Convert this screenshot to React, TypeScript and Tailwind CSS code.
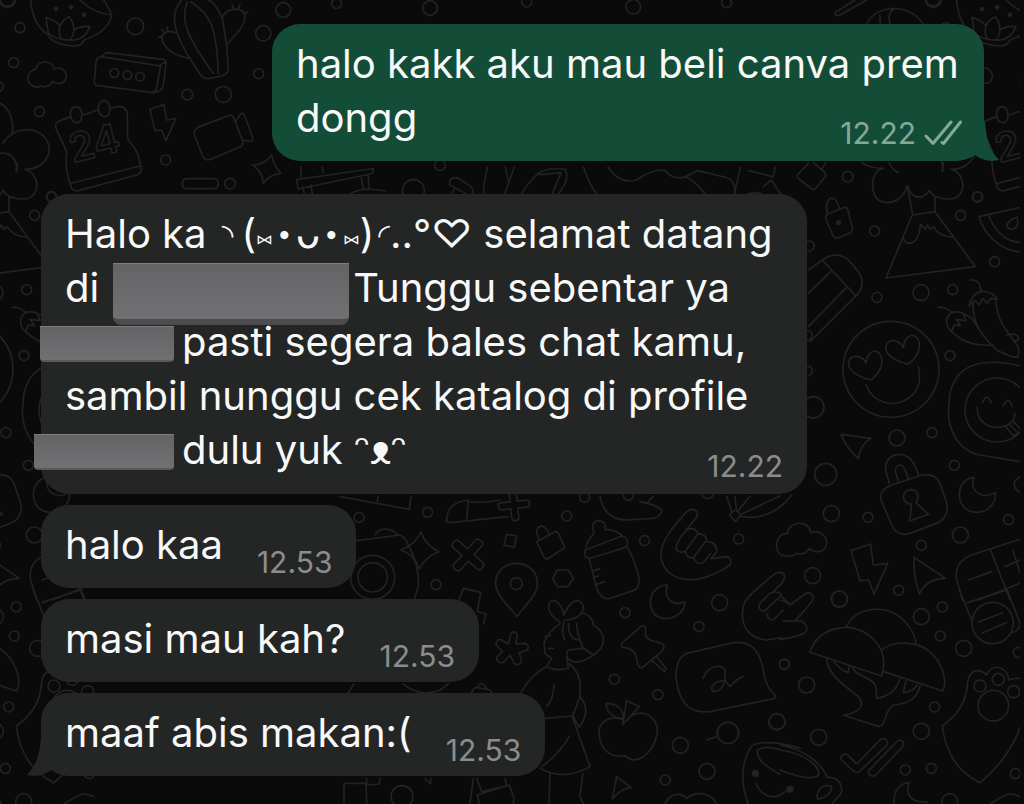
import React from "react";

type Dot = [number, number, number];

type Patch = {
  transform: string;
  width: number;
  circles: Dot[];
  dots?: Dot[];
  paths: string[];
};

const plus =
  "M-13 -48Q-13 -58 0 -58Q13 -58 13 -48L13 -13L48 -13Q58 -13 58 0Q58 13 48 13L13 13L13 48Q13 58 0 58Q-13 58 -13 48L-13 13L-48 13Q-58 13 -58 0Q-58 -13 -48 -13L-13 -13Z";

const patches: Patch[] = [
  {
    // bowl, cloud, cassette, cactus, calendar, camera
    transform: "scale(0.3333)",
    width: 5,
    circles: [
      [22, -4, 22], [60, 83, 15], [406, 79, 25], [41, 188, 15], [-6, 260, 15], [118, 335, 15],
      [790, 100, 23], [776, 221, 15], [562, 284, 16], [670, 283, 24], [497, 480, 15], [690, 551, 16],
      [154, 590, 15], [343, 219, 13], [382, 225, 13], [420, 230, 13], [850, 30, 22], [1010, 10, 15],
      [1290, 24, 22], [1580, 6, 15], [1900, 20, 22], [2180, 8, 15],
    ],
    dots: [[168, 27, 7], [213, 22, 7], [252, 44, 7]],
    paths: [
      "M92 0C95 50 115 85 145 105C150 125 190 138 225 138C245 138 250 125 252 120C295 105 330 80 335 45C325 20 318 8 310 0M240 0C265 25 300 42 335 45",
      "M145 100L138 52C155 58 172 65 180 78C185 65 195 55 208 50C220 65 222 80 222 90C235 82 255 78 270 80C262 100 250 118 222 120C190 122 165 115 145 100M180 78C175 95 178 108 185 118M222 90C220 105 215 115 210 120",
      "M100 258C75 250 80 212 108 207C112 180 155 178 163 207C190 195 205 225 196 240C188 255 165 250 158 244C150 262 130 262 125 258C115 262 105 262 100 258",
      "M303 170Q290 172 288 185L283 245Q283 256 295 257L455 277Q468 278 470 262L482 198L303 170L320 158L490 178Q500 180 498 192L490 255Q488 275 460 278M480 196L498 185",
      "M545 0C510 40 520 90 560 160L600 222Q608 236 625 236L665 228Q685 222 685 205L680 135L668 60C655 25 640 5 625 0M562 5C540 60 560 110 640 220M572 5C630 40 650 80 655 220",
      "M525 98C500 90 480 100 487 122C497 150 530 170 572 175M668 50C680 20 735 20 735 50C735 80 700 110 680 135M485 110L475 112M492 98L486 88M503 92L500 82M700 25L696 14M715 25L720 13M732 40L743 37",
      "M212 350L180 362Q162 368 168 385L200 455C193 500 205 540 215 565Q222 574 235 572L410 525Q425 520 424 505L420 490C415 450 395 435 383 415L382 340Q378 318 355 320L330 324M250 345L293 330M215 550L420 498",
      "M228 320Q245 322 246 345Q245 368 230 368Q212 365 211 342Q212 322 228 320M312 302Q329 304 330 327Q329 350 314 350Q296 347 295 324Q296 304 312 302",
      "M450 328L492 314L500 360L527 356L498 422L485 390L465 392Z",
      "M598 380L685 347Q697 343 702 355L727 420Q732 437 718 442L632 478Q615 484 608 468L583 405Q580 388 598 380M708 362L722 342Q730 336 734 348L758 412Q760 425 748 424L727 420",
      "M757 495Q795 495 815 465Q820 495 842 520Q805 525 790 550Q788 515 757 495",
      "M562 536H640Q655 536 655 551Q655 566 640 566H562Q547 566 547 551Q547 536 562 536",
      "M0 310C30 325 45 370 35 405M8 430C40 380 110 375 140 420C165 470 120 510 75 507C120 520 125 590 75 597C45 598 20 590 10 572M0 460C35 455 55 485 48 515",
    ],
  },
  {
    // comet and basketball
    transform: "translate(800 0) scale(0.3333)",
    width: 5,
    circles: [[400, -2, 24]],
    paths: ["M165 0L105 38Q106 50 118 46L200 0M200 72C230 10 330 10 370 72M240 70L240 45M270 70Q260 40 285 25"],
  },
  {
    // objects between the first two bubbles
    transform: "translate(200 140) scale(0.408)",
    width: 4,
    circles: [[523, 124, 27], [942, 149, 13], [588, 62, 13]],
    paths: [
      "M247 66L248 92M237 97L425 70L423 82L240 120ZM252 115L260 150M272 110L278 148M300 66L302 80M395 88L400 120M412 84L415 120M255 160Q280 140 300 148C340 155 350 148 375 128Q400 115 455 125",
      "M612 100Q620 88 635 95L665 115Q675 128 662 137L612 110ZM625 118L598 160M655 137L640 162",
      "M705 66Q690 120 697 162M748 66L757 105L770 66M757 105Q745 140 728 162",
      "M785 140Q790 120 828 82Q850 66 895 72Q910 100 870 140Q830 165 800 162Q782 160 785 140M830 85L885 80L862 135",
      "M940 66Q960 130 1000 162M1000 66Q1030 110 1070 98Q1110 70 1140 75Q1160 100 1190 90L1220 75L1290 92Q1320 100 1308 160M1190 90Q1230 110 1255 162",
      "M1325 66L1310 130M1345 75L1405 90L1410 66M1310 160Q1350 110 1390 140Q1385 155 1320 162M1380 115L1400 98L1428 140L1410 162M1077 138L1065 162",
    ],
  },
  {
    // volcano, pencil, smileys, chillies
    transform: "translate(790 160) scale(0.3333)",
    width: 5,
    circles: [
      [173, 50, 16], [254, 213, 15], [512, 166, 15], [563, 111, 15], [614, 305, 15], [393, 398, 24],
      [261, 412, 15], [488, 389, 15], [480, 587, 15], [58, 258, 15], [52, 527, 15], [52, 633, 15],
      [70, 742, 32], [303, 628, 144],
    ],
    dots: [[146, 188, 8]],
    paths: [
      "M215 8C235 22 260 25 280 25C240 30 235 110 275 125C310 135 340 115 352 78C365 120 400 120 418 92M298 8Q305 28 325 38M460 8L458 35",
      "M352 78L368 162L288 354L556 320L435 155L435 110M368 165L435 155M340 235C350 258 380 255 388 215L392 192L405 208L412 195L420 208L430 200C445 225 470 232 488 230",
      "M118 160L160 143Q170 140 174 150L187 205Q188 216 178 220L145 233Q132 236 128 225L107 175Q105 165 118 160M112 160C100 105 140 100 148 145",
      "M55 10L22 45Q20 52 26 57L65 86Q72 90 78 84L107 48Q108 40 103 36L70 8M95 28L108 8",
      "M55 330L97 300C130 275 160 285 180 305L205 335C220 355 220 380 205 400L60 545M97 300L198 408M55 400L122 335M55 500L170 382",
      "M242 660C200 650 165 625 178 600C190 580 220 590 228 610C232 570 262 562 274 590C282 620 262 645 242 660",
      "M354 613C312 603 277 578 290 553C302 533 332 543 340 563C344 523 374 515 386 543C394 573 374 598 354 613",
      "M228 675C250 730 310 745 355 715C385 695 395 660 385 620",
      "M540 360Q570 355 573 395M550 430C545 480 575 530 620 570Q660 592 682 592C695 570 680 550 655 520C630 485 620 460 618 425M537 438C545 405 565 390 585 395Q610 398 622 418L603 415L592 430L578 415L568 435L555 422Z",
      "M445 442Q470 440 485 458C465 470 465 500 485 515C510 540 550 560 612 555M485 458C510 450 530 465 545 475Q555 485 565 505M485 515L492 495L512 497L498 478L528 482L520 462M650 525C690 515 695 545 670 545",
      "M690 142L567 170C585 230 640 275 690 275M597 168C615 215 650 245 690 247M665 208C640 205 650 180 682 172Q688 205 665 208",
      "M690 618C600 595 540 610 510 640C485 670 478 700 478 720M578 728Q590 695 603 728M640 738Q655 705 667 740",
    ],
  },
  {
    // padlock, moon, arrows, calculator top
    transform: "translate(780 400) scale(0.3333)",
    width: 5,
    circles: [
      [351, 114, 24], [456, 98, 15], [523, 196, 15], [137, 223, 33], [154, 341, 24], [264, 352, 15],
      [541, 405, 24], [424, 436, 15], [686, 359, 15], [98, 527, 24], [356, 571, 15], [178, 597, 24],
      [651, 30, 96],
    ],
    paths: [
      "M508 0C495 80 530 150 600 165L720 185M592 22C590 60 620 85 655 82C690 78 705 60 705 40M678 80L700 108L720 95M700 65L720 85M690 75L710 95",
      "M183 103L273 115Q240 135 235 176Q200 145 183 103Z",
      "M328 250L318 215C312 180 335 165 355 163C390 162 405 190 415 225M355 242L346 215Q345 195 362 195Q375 200 384 235M335 255L425 225Q465 218 480 250L502 315Q505 350 475 368L385 402Q350 408 335 375L303 300Q298 268 335 255",
      "M385 312L395 312L389 363L446 343L408 308Q420 290 408 274Q393 264 378 274Q364 290 376 305Q383 312 395 312",
      "M582 232C530 235 520 320 575 335C620 345 650 310 646 278C610 300 565 275 582 232M720 230Q685 254 720 278",
      "M22 400C30 360 85 360 93 398C125 385 150 420 135 445C120 462 95 455 88 445C80 462 60 465 50 460C30 475 15 468 5 465C-20 455 -15 400 22 400",
      "M213 452L272 432L280 495L323 490L282 583L266 540L240 542Z",
      "M402 472L496 535Q440 535 418 582Q400 530 402 472Z",
      "M720 418L575 465C535 480 525 510 530 540L548 600M632 450L690 600M595 600L720 550M565 540L635 515M698 450L720 518M675 500L720 480",
    ],
  },
  {
    // mushrooms, ticks, paw
    transform: "translate(780 590) scale(0.3333)",
    width: 5,
    circles: [
      [178, 27, 24], [424, 80, 24], [487, 51, 15], [481, 138, 15], [551, 175, 24], [80, 285, 24],
      [13, 222, 15], [464, 351, 15], [424, 424, 24], [116, 442, 24], [376, 540, 15], [454, 535, 15],
      [706, 551, 15], [509, 635, 24], [-9, 395, 24], [600, 288, 18], [655, 268, 18], [701, 305, 18],
      [640, 347, 46], [638, 99, 62], [715, 187, 15],
    ],
    dots: [[30, 598, 11]],
    paths: [
      "M538 0L575 90M563 38L680 0M682 0L720 100Q718 125 695 127M595 97L668 68M608 128L678 98",
      "M90 187C110 120 190 95 250 125C310 160 320 210 305 258ZM200 108C230 50 320 40 370 90Q405 125 408 160M305 180C340 150 420 150 460 195C495 235 500 280 488 303L312 245",
      "M140 205C145 260 195 285 235 320C260 350 230 370 190 376L298 410C320 405 315 350 345 345C380 340 410 330 420 288M218 232C225 260 280 260 288 290L290 325C330 320 350 300 360 265M162 215Q180 240 205 247L208 230M378 272L370 308Q400 305 412 285",
      "M188 495Q200 488 208 500L230 522L300 450Q315 440 322 455Q324 462 318 468L240 543Q230 552 220 543L185 510Q180 500 188 495M268 540L350 455Q362 446 370 456Q374 464 366 472L290 552Q280 562 270 556Q262 548 268 540",
      "M342 642C340 600 360 580 388 578C375 610 390 640 440 635L440 645",
      "M0 465C60 475 120 510 142 562C185 560 190 600 180 615L155 642M0 480C70 490 110 520 118 550C110 575 50 560 0 540M112 627C108 600 130 580 155 590C155 610 135 625 112 627",
      "M487 408C540 370 560 330 563 275C570 235 600 235 620 255C635 220 680 225 687 270Q705 262 720 266M487 408C495 480 530 545 600 578C660 530 705 460 720 412M630 642C680 610 690 605 720 620",
      "M0 30Q20 35 30 45L70 15Q90 0 100 20Q105 30 45 92M10 93L65 93Q90 110 75 128Q60 140 0 148",
    ],
  },
  {
    // feeding bottle, hands, speech bubble, apple, girl
    transform: "translate(540 490) scale(0.3333)",
    width: 5,
    circles: [
      [80, 78, 15], [314, 152, 15], [596, 147, 15], [539, 338, 24], [255, 368, 15], [477, 410, 15],
      [733, 523, 15], [223, 568, 15], [354, 614, 15], [711, 695, 24], [421, 766, 24], [564, 729, 32],
      [501, 844, 24], [376, 870, 15], [134, 22, 15], [265, 16, 15], [503, 8, 18],
    ],
    dots: [[646, 850, 11]],
    paths: [
      "M500 750L530 740M52 240L84 240L100 265L84 290L52 290L38 265Z",
      "M162 130Q150 95 175 92Q200 95 195 118Q235 120 250 140M162 130Q142 150 138 172M135 180L240 140Q255 135 260 150Q268 165 255 173L150 205Q130 205 135 180M148 208L170 295Q180 325 205 327L280 302Q300 295 297 265Q285 210 262 172M160 243L180 236M160 263L175 257M165 285L193 275",
      "M440 118L468 85Q478 65 465 60Q455 55 440 65C400 110 365 150 363 190C362 245 410 275 470 268C510 262 550 240 570 225Q578 205 560 200L515 206M440 120Q410 150 408 175Q415 190 435 185L475 130Q460 108 440 120M475 130Q500 135 500 150L460 203Q440 205 436 185M500 155Q530 155 530 185L513 206M513 190L490 218Q465 225 462 203",
      "M700 305L725 280Q740 260 730 250Q715 242 700 255C660 290 615 320 610 350C600 400 620 445 680 450L725 443M690 310L660 340Q652 360 672 365L725 315Q715 300 690 310M725 320L735 330M730 360L700 390Q680 390 683 370M735 330L750 343M735 393L755 393",
      "M382 285C330 285 315 350 350 378C390 400 435 370 435 335C400 350 370 330 382 285",
      "M245 460L300 412Q310 402 318 415Q310 440 330 450L370 462Q375 475 365 485L310 530Q300 540 292 520C290 490 280 475 250 472Q240 468 245 460M335 512L375 545L378 535L350 500",
      "M440 490L580 458C640 450 660 490 670 540Q675 590 705 615Q710 625 695 627L510 665C440 672 415 630 408 560Q408 505 440 490M490 565C500 530 540 520 555 540C560 580 545 605 520 605C505 590 530 570 555 572L570 590Q590 565 610 560",
      "M250 690C215 675 170 690 178 740C185 790 225 805 255 797C290 830 340 790 352 730C355 680 310 655 270 680L248 703L260 632L298 650L262 690M250 685C215 685 200 665 198 640C230 640 250 655 250 685",
      "M230 860L273 892Q245 895 217 927ZM375 942C390 910 420 905 440 925C470 900 515 910 530 942",
      "M180 20C190 70 220 90 260 90L340 85Q368 75 365 60Q350 45 300 35M320 40L340 18",
      "M560 18L575 65M585 20L590 60M630 18L595 62M720 18L605 72M605 80C670 90 720 60 755 15M568 75L587 58L602 75L587 95Z",
      "M60 395C20 375 15 330 45 332Q65 340 72 375Q90 330 115 332C145 345 130 390 72 390M60 400Q20 430 12 460L15 490Q25 500 35 505L20 530Q50 545 85 535L80 500M128 370Q160 380 160 405C205 430 195 475 160 495Q130 520 100 515Q70 505 85 480L130 475Q110 430 110 400M72 395Q62 430 75 450M85 400Q85 450 120 450M130 475L160 495M15 440L32 436M25 475L40 475",
      "M20 530C-20 550 -40 580 -60 612M85 520C130 550 120 600 120 620L97 680L150 830Q70 875 0 835M42 585Q40 630 20 650M15 685L97 678M120 620Q155 660 118 712L100 680M87 740Q60 790 5 830M30 850L27 942M128 850L120 920L130 942",
      "M780 775C700 750 640 755 630 775C600 830 605 890 625 942M720 853C680 830 650 810 652 782C670 765 700 775 720 778M648 880C665 925 710 930 735 905",
    ],
  },
  {
    // camera, cross, map pin, asterisk
    transform: "translate(340 490) scale(0.3333)",
    width: 5,
    circles: [[57, 82, 15], [263, 67, 15], [288, 284, 15], [98, 262, 66], [98, 262, 44], [529, 281, 18], [186, 920, 33]],
    paths: [
      "M50 152L180 135Q195 140 205 165Q240 230 235 290L222 330M105 135Q115 115 145 118Q165 122 172 135",
      "M183 180Q225 165 243 126Q255 165 297 185Q255 200 238 237Q225 195 183 180",
      "M500 133L530 138L523 172L492 165ZM590 155L645 125Q652 124 655 130L675 172L622 207Q616 208 613 203ZM598 148C575 110 610 90 628 132",
      "M531 380C510 350 468 320 467 280C467 200 592 200 592 280C592 320 550 350 531 380",
      "M505 462L512 432Q525 418 532 435L528 462L555 460Q570 468 562 480L538 488L545 515Q535 530 522 520L510 495L490 518Q470 520 470 502L488 484L468 465Q468 445 485 450Z",
      "M320 95C320 50 345 35 385 30M385 32L380 90M385 35Q430 40 480 30M320 95L330 98L505 80",
      "M357 330L370 295L422 307L412 365L438 372L430 402M0 20L208 58L213 18M112 35L115 18",
      "M395 612Q395 595 410 592L450 600L458 612M412 590Q425 570 440 595M190 582Q240 625 300 600L325 582M22 612L42 582",
      "M12 942L12 880L78 880L80 942M80 865L80 885L118 882L120 865M255 865L272 882L272 865M390 942L400 865M410 865L425 905L500 888L495 865M412 915L508 885L522 925L520 942M412 915L418 942",
    ],
  },
];

function Doodles() {
  return (
    <>
      {patches.map((patch) => (
        <g key={patch.transform} transform={patch.transform} strokeWidth={patch.width}>
          {patch.paths.map((d) => (
            <path key={d} d={d} />
          ))}
          {patch.circles.map(([cx, cy, r]) => (
            <circle key={`${cx}-${cy}-${r}`} cx={cx} cy={cy} r={r} />
          ))}
          {(patch.dots ?? []).map(([cx, cy, r]) => (
            <circle key={`dot-${cx}-${cy}`} cx={cx} cy={cy} r={r} fill="#222222" stroke="none" />
          ))}
        </g>
      ))}
      <path d={plus} transform="translate(468 555) rotate(42) scale(0.3333)" strokeWidth="5" />
      <path d={plus} transform="translate(514 505) rotate(-6) scale(0.27)" strokeWidth="6" />
      <text
        x="73"
        y="163"
        transform="rotate(-14 73 163)"
        fontSize="40"
        fontWeight="600"
        fontFamily="Inter, sans-serif"
        strokeWidth="1.5"
      >
        24
      </text>
    </>
  );
}

function Wallpaper() {
  return (
    <svg
      aria-hidden="true"
      viewBox="0 0 1024 804"
      preserveAspectRatio="xMinYMin slice"
      className="absolute inset-0 h-full w-full"
      fill="none"
      stroke="#222222"
      strokeLinecap="round"
      strokeLinejoin="round"
    >
      <defs>
        <clipPath id="wallpaper-edge">
          <rect width="1020" height="804" />
        </clipPath>
        <g id="doodles">
          <Doodles />
        </g>
      </defs>
      <g clipPath="url(#wallpaper-edge)">
        <use href="#doodles" />
        <use href="#doodles" x="926" />
        <use href="#doodles" x="-926" />
      </g>
    </svg>
  );
}

function Ticks() {
  return (
    <svg
      role="img"
      aria-label="Terkirim"
      viewBox="0 0 38 26"
      className="h-[26px] w-[38px]"
      fill="none"
      stroke="#84a899"
      strokeWidth="3"
      strokeLinecap="round"
      strokeLinejoin="round"
    >
      <path d="M2 16L9 23.500L27 2M18 22.500L19.500 23.500L36.500 2" />
    </svg>
  );
}

function Time({ value, className }: { value: string; className: string }) {
  return <time className={`text-[30px] leading-9 ${className}`}>{value}</time>;
}

function Line({ children }: { children: React.ReactNode }) {
  return <span className="flex h-[54px] items-center whitespace-pre">{children}</span>;
}

function Redaction({ className }: { className: string }) {
  return (
    <span
      aria-hidden="true"
      className={`shrink-0 border-t border-t-[#7d7d80] bg-linear-to-b from-[#646467] to-[#717174] ${className}`}
    />
  );
}

function ShortMessage({ text, time, tail }: { text: string; time: string; tail?: boolean }) {
  return (
    <li className="relative flex items-end rounded-[28px] bg-[#242626] px-6 pt-[13px] pb-4">
      {tail && (
        <svg aria-hidden="true" viewBox="0 0 50 40" className="absolute bottom-0 -left-3.5 h-10 w-[50px]" fill="#242626">
          <path d="M14 0C13 16 10 29 0 39C8 41 18 39 24 34C31 39 40 40 50 40V0Z" />
        </svg>
      )}
      <p className="relative leading-[54px]">{text}</p>
      <Time value={time} className="relative -mb-2 ml-[34px] text-[#8b8d8d]" />
    </li>
  );
}

export default function App() {
  return (
    <main className="relative min-h-screen overflow-hidden bg-[#0a0a0a] font-['Inter','DejaVu_Sans','Noto_Sans',sans-serif] text-[40px] text-[#f7f8f8]">
      <Wallpaper />
      <ol className="relative flex flex-col items-start gap-[11px] pt-6 pr-10 pl-[41px]">
        <li className="relative mb-[22px] w-[712px] self-end rounded-[28px] bg-[#144d37] px-6 pt-[13px] pb-4">
          <svg aria-hidden="true" viewBox="0 0 50 40" className="absolute -right-[15px] bottom-0 h-10 w-[50px]" fill="#144d37">
            <path d="M36 0C37 16 40 29 50 39C42 41 32 39 26 34C19 39 10 40 0 40V0Z" />
          </svg>
          <p className="relative leading-[54px]">
            <Line>halo kakk aku mau beli canva prem</Line>
            <Line>dongg</Line>
          </p>
          <div className="absolute right-[22px] bottom-2.5 flex items-center gap-2">
            <Time value="12.22" className="text-[#84a899]" />
            <Ticks />
          </div>
        </li>

        <li className="relative w-[766px] rounded-[28px] bg-[#242626] px-6 pt-[13px] pb-[17px]">
          <p className="leading-[54px]">
            <Line>
              Halo ka <span className="ml-1 text-[30px]">◝</span>
              <span className="ml-2">(</span>
              <span className="mt-2 text-[28px]">⑅</span>
              <span className="ml-1 text-[26px]">•</span>
              <span className="mx-1">ᴗ</span>
              <span className="mr-1 text-[26px]">•</span>
              <span className="mt-2 text-[28px]">⑅</span>)
              <span className="ml-1 text-[30px]">◜</span>
              ..°♡ selamat datang
            </Line>
            <Line>
              di
              <Redaction className="mt-3 ml-3.5 h-[62px] w-[236px] rounded-b-lg border-b-6 border-b-[#4c4c4f]" />
              <span className="ml-1">Tunggu sebentar ya</span>
            </Line>
            <Line>
              <Redaction className="mt-1 -ml-[25px] h-9 w-[134px] rounded-b border-b-2 border-b-[#59595e]" />
              <span className="ml-2">pasti segera bales chat kamu,</span>
            </Line>
            <Line>sambil nunggu cek katalog di profile</Line>
            <Line>
              <Redaction className="mt-1 -ml-[31px] h-9 w-[140px] rounded-b border-b-2 border-b-[#59595e]" />
              <span className="ml-2">dulu yuk ᵔᴥᵔ</span>
            </Line>
          </p>
          <Time value="12.22" className="absolute right-6 bottom-2.5 text-[#8b8d8d]" />
        </li>

        <ShortMessage text="halo kaa" time="12.53" />
        <ShortMessage text="masi mau kah?" time="12.53" />
        <ShortMessage text="maaf abis makan:(" time="12.53" tail />
      </ol>
    </main>
  );
}
